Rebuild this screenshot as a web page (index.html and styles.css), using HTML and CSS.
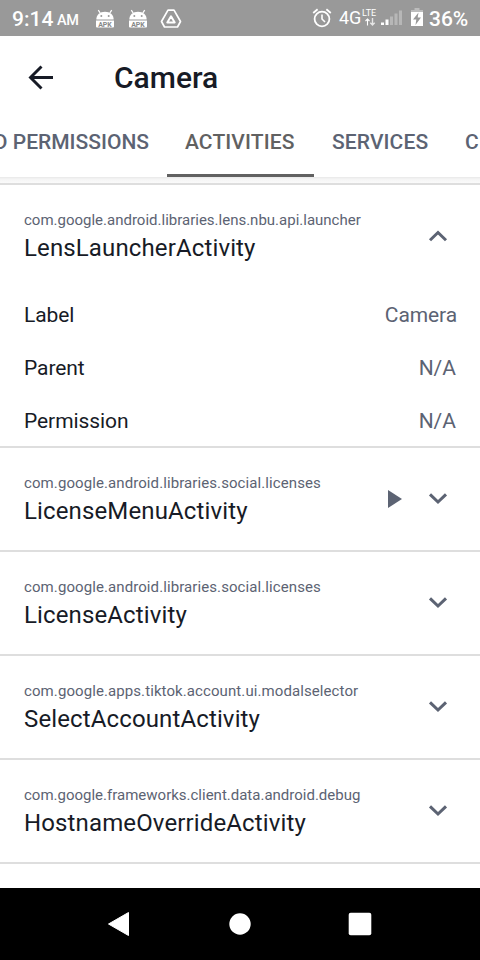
FILE: index.html
```html
<!DOCTYPE html>
<html lang="en">
<head>
<meta charset="utf-8">
<title>Camera</title>
<link rel="stylesheet" href="styles.css">
</head>
<body>
<header class="status">
  <span class="time">9:14</span><span class="ampm">AM</span>
  <svg class="apk" width="20" height="20" viewBox="0 0 20 20">
    <path d="M3.300 1.200 5.200 4M16.700 1.200 14.800 4" stroke="#fff" stroke-width="1.300"/>
    <path d="M1.300 10.600C1.300 5.700 5 2.700 10 2.700s8.700 3 8.700 7.900z" fill="#fff"/>
    <circle cx="6.300" cy="7" r="1" fill="#999"/><circle cx="13.700" cy="7" r="1" fill="#999"/>
    <path d="M1 11.500h18v6q0 1-1 1H2q-1 0-1-1z" fill="#fff"/>
    <text x="10" y="17.500" text-anchor="middle" class="apk-text">APK</text>
  </svg>
  <svg class="apk apk2" width="20" height="20" viewBox="0 0 20 20">
    <path d="M3.300 1.200 5.200 4M16.700 1.200 14.800 4" stroke="#fff" stroke-width="1.300"/>
    <path d="M1.300 10.600C1.300 5.700 5 2.700 10 2.700s8.700 3 8.700 7.900z" fill="#fff"/>
    <circle cx="6.300" cy="7" r="1" fill="#999"/><circle cx="13.700" cy="7" r="1" fill="#999"/>
    <path d="M1 11.500h18v6q0 1-1 1H2q-1 0-1-1z" fill="#fff"/>
    <text x="10" y="17.500" text-anchor="middle" class="apk-text">APK</text>
  </svg>
  <svg class="tri" width="22" height="20" viewBox="0 0 22 20" fill="none" stroke="#fff" stroke-linejoin="round">
    <path d="M8 1.200h6l6.500 11.300-3 5.500h-13l-3-5.500z" stroke-width="1.700"/><path d="M11 7.300 14.700 13.500H7.300z" stroke-width="2"/>
  </svg>
  <svg class="alarm" width="20" height="20" viewBox="0 0 20 20" fill="none" stroke="#fff">
    <circle cx="10" cy="11" r="7.400" stroke-width="1.800"/><path d="M10 6.500V11l3 3" stroke-width="1.600"/><path d="M1.200 5 5.600 1.300M18.800 5 14.400 1.300" stroke-width="1.800"/>
  </svg>
  <span class="net">4G</span>
  <span class="lte"><span>LTE</span>
    <svg width="12" height="8" viewBox="0 0 12 8" fill="none" stroke="#fff"><path d="M3.500 7.500V1M1.500 3l2-2 2 2" stroke-width="1.100"/><path d="M8.500 0v7M6.300 4.800l2.200 2.200 2.200-2.200" stroke-width="1.400" opacity=".75"/></svg>
  </span>
  <svg class="signal" width="22" height="16" viewBox="0 0 22 16"><g fill="#fff"><path d="M0 12.500h3V15H0zM4.500 9.500h3V15h-3z"/><path opacity=".3" d="M9 6.500h3V15H9zM13.500 3.500h3V15h-3zM18 .5h3V15h-3z"/></g></svg>
  <svg class="battery" width="12" height="19" viewBox="0 0 12 19"><path d="M3.500 0h5v2H12v3H0V2h3.500z" fill="#fff" opacity=".35"/><path d="M0 4h12v14H0z" fill="#fff"/><path d="M7.500 4.500 2 11.500h3.300L4.500 17 10 9.500H6.700z" fill="#999"/></svg>
  <span class="pct">36%</span>
</header>
<div class="appbar">
  <div class="toolbar">
    <svg width="26" height="26" viewBox="0 0 26 26" fill="none" stroke="#171b26" stroke-width="2.900"><path d="M25 13.500H3M13.500 2.500 2.500 13.500l11 11"/></svg>
    <h1>Camera</h1>
  </div>
  <nav class="tabs">
    <span class="tab first">D PERMISSIONS</span>
    <span class="tab active">ACTIVITIES</span>
    <span class="tab">SERVICES</span>
    <span class="tab last">C</span>
  </nav>
</div>
<main>
  <section>
    <div class="row"><div class="names"><p class="pkg">com.google.android.libraries.lens.nbu.api.launcher</p><h2>LensLauncherActivity</h2></div><svg class="chev up" width="24" height="16" viewBox="0 0 24 16"><path d="M4 3.700 12 11.500l8-7.800"/></svg></div>
    <dl><div><dt>Label</dt><dd class="cam">Camera</dd></div><div><dt>Parent</dt><dd>N/A</dd></div><div><dt>Permission</dt><dd>N/A</dd></div></dl>
  </section>
  <section>
    <div class="row"><div class="names"><p class="pkg wide">com.google.android.libraries.social.licenses</p><h2>LicenseMenuActivity</h2></div><svg class="play" width="14" height="18" viewBox="0 0 14 18"><path d="M0 0v18l14-9z" fill="#5c6373"/></svg><svg class="chev" width="24" height="16" viewBox="0 0 24 16"><path d="M4 3.300 12 11l8-7.700"/></svg></div>
  </section>
  <section>
    <div class="row"><div class="names"><p class="pkg wide">com.google.android.libraries.social.licenses</p><h2>LicenseActivity</h2></div><svg class="chev" width="24" height="16" viewBox="0 0 24 16"><path d="M4 3.300 12 11l8-7.700"/></svg></div>
  </section>
  <section>
    <div class="row"><div class="names"><p class="pkg wide">com.google.apps.tiktok.account.ui.modalselector</p><h2>SelectAccountActivity</h2></div><svg class="chev" width="24" height="16" viewBox="0 0 24 16"><path d="M4 3.300 12 11l8-7.700"/></svg></div>
  </section>
  <section>
    <div class="row"><div class="names"><p class="pkg">com.google.frameworks.client.data.android.debug</p><h2>HostnameOverrideActivity</h2></div><svg class="chev" width="24" height="16" viewBox="0 0 24 16"><path d="M4 3.300 12 11l8-7.700"/></svg></div>
  </section>
</main>
<footer class="navbar">
  <svg width="24" height="26" viewBox="0 0 24 26"><path d="M21.500 1.500v23L1.500 13z" fill="#fff" stroke="#fff" stroke-linejoin="round"/></svg>
  <svg width="24" height="24" viewBox="0 0 24 24"><circle cx="12" cy="12" r="10.700" fill="#fff"/></svg>
  <svg width="24" height="24" viewBox="0 0 24 24"><rect x=".7" y=".7" width="22.600" height="22.600" rx="2" fill="#fff"/></svg>
</footer>
</body>
</html>
```
FILE: styles.css
```css
* { box-sizing: border-box; margin: 0; padding: 0; }
body { width: 480px; height: 960px; overflow: hidden; display: flex; flex-direction: column; background: #fff; font-family: Roboto, sans-serif; color: #171b26; }
svg { display: block; flex: none; }
.status { height: 36px; flex: none; background: #999; color: #fff; display: flex; align-items: flex-start; padding-left: 12px; white-space: nowrap; font-weight: 500; }
.time { font-size: 21px; line-height: 24px; margin-top: 7px; width: 45px; }
.ampm { font-size: 14.500px; line-height: 18px; margin-top: 12px; width: 38px; letter-spacing: -.4px; }
.apk { margin-top: 9px; }
.apk2 { margin-left: 13px; }
.apk-text { font: 700 7px Roboto, sans-serif; fill: #888; }
.tri { margin: 9px 0 0 12px; }
.alarm { margin: 8px 0 0 130px; }
.net { font-size: 18px; line-height: 20px; margin: 8px 0 0 7px; width: 23px; font-weight: 400; letter-spacing: -.1px; }
.lte { font-size: 9px; line-height: 9px; margin-top: 9px; width: 19px; font-weight: 400; }
.lte svg { margin-left: 2px; }
.signal { margin-top: 10px; }
.battery { margin: 8px 0 0 8px; }
.pct { font-size: 21px; line-height: 24px; margin: 7px 0 0 6px; }
.appbar { height: 141px; flex: none; display: flex; flex-direction: column; }
.toolbar { height: 69px; display: flex; padding-left: 28px; }
.toolbar svg { margin-top: 28px; }
h1 { font-size: 30px; line-height: 36px; font-weight: 500; margin: 24px 0 0 60px; }
.tabs { height: 72px; display: flex; overflow: hidden; font-size: 21px; font-weight: 500; color: #5c6373; }
.tab { flex: none; width: 133px; padding: 0 18px; line-height: 74px; white-space: nowrap; letter-spacing: .1px; }
.tab.first { width: 167px; padding: 0 18px 0 0; display: flex; justify-content: flex-end; letter-spacing: 0; }
.tab.active { width: 147px; color: #616161; border-bottom: 3px solid #616161; }
.tab.last { width: 33px; overflow: hidden; }
main { flex: 1; padding-top: 6px; background: linear-gradient(#e8e8e8, #f4f4f4 2px, #fafafa 6px) top / 100% 6px no-repeat; }
section { border-top: 2px solid #dedede; }
section:last-child { border-bottom: 2px solid #dedede; }
.row { height: 102px; display: flex; align-items: center; padding: 0 30px 0 24px; }
.names { flex: 1; }
.pkg { font-size: 15px; line-height: 20px; color: #5c6373; margin-top: 1px; }
.wide { letter-spacing: .09px; }
h2 { font-size: 24px; line-height: 32px; font-weight: 400; margin-top: 2px; letter-spacing: .13px; }
.chev { fill: none; stroke: #5c6373; stroke-width: 3; }
.play { margin-right: 24px; }
.up { transform: rotate(180deg); }
dl div { height: 53px; display: flex; justify-content: space-between; padding: 0 24px; font-size: 21px; line-height: 57px; }
dt { letter-spacing: -.08px; }
dd { color: #5c6373; }
.cam { margin-right: -1px; letter-spacing: -.1px; }
.navbar { height: 72px; flex: none; background: #000; display: flex; align-items: center; justify-content: space-between; padding: 0 108px 0 107px; }
```
